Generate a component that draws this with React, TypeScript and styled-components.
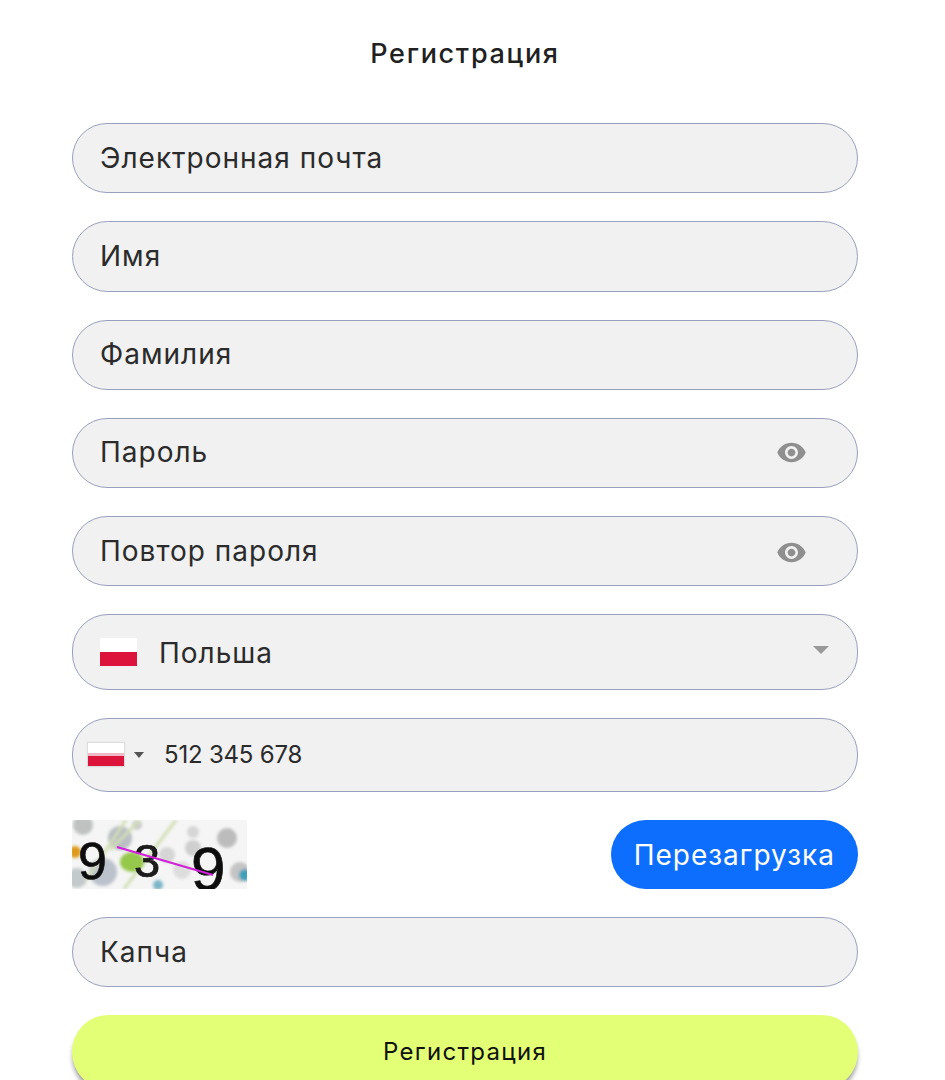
import styled, { createGlobalStyle } from 'styled-components';
import { MdVisibility } from 'react-icons/md';

const GlobalStyle = createGlobalStyle`
  html, body {
    margin: 0;
    padding: 0;
    height: 1080px;
    overflow: hidden;
    background: #fff;
    font-family: 'Inter', 'Open Sans', sans-serif;
  }
  * { box-sizing: border-box; }
`;

const Page = styled.main`
  width: 945px;
  height: 1080px;
  overflow: hidden;
  padding: 0 87px 0 72px;
`;

const Title = styled.h1`
  margin: 0;
  height: 123px;
  padding-top: 37px;
  font-size: 27px;
  line-height: 34px;
  font-weight: 500;
  letter-spacing: 1.7px;
  color: #212121;
  text-align: center;
`;

const Form = styled.form`
  display: flex;
  flex-direction: column;
  gap: 28px;
`;

const Field = styled.div<{ $height?: number; $pad?: number }>`
  display: flex;
  flex: none;
  align-items: center;
  height: ${({ $height }) => $height ?? 70.25}px;
  padding: 0 28px 0 ${({ $pad }) => $pad ?? 27}px;
  background: #f1f1f1;
  border: 1px solid #98a0bd;
  border-radius: 36px;
  color: #2b2b2b;
  font-size: 28px;
  letter-spacing: 1px;
`;

const Label = styled.span<{ $shift?: number }>`
  flex: 1;
  margin-top: ${({ $shift }) => $shift ?? -1}px;
`;

const EyeButton = styled.span<{ $shift?: number }>`
  display: flex;
  margin: ${({ $shift }) => $shift ?? 0}px 22px 0 0;
  color: #8f8f8f;
`;

const Arrow = styled.span`
  width: 0;
  height: 0;
  border-left: 8px solid transparent;
  border-right: 8px solid transparent;
  border-top: 8px solid #999;
  margin-top: -4px;
`;

const CountryFlag = styled.span`
  flex: none;
  width: 37px;
  height: 28px;
  margin-right: 22px;
  background: linear-gradient(#fff 0 50%, #dc143c 50%);
`;

const PhoneFlag = styled.span`
  flex: none;
  width: 36px;
  height: 23px;
  margin-top: -1px;
  box-shadow: 0 0 1px 1px #ddd;
  background: linear-gradient(#fff 0 42%, #eeb8c4 42% 56%, #dc143c 56%);
`;

const PhoneArrow = styled.span`
  flex: none;
  width: 0;
  height: 0;
  margin: 0 20px 0 10px;
  border-left: 5px solid transparent;
  border-right: 5px solid transparent;
  border-top: 6px solid #555;
`;

const Phone = styled.span`
  margin-top: -1px;
  font-size: 24px;
  letter-spacing: -0.2px;
  color: #2b2b2b;
`;

const CaptchaRow = styled.div`
  display: flex;
  flex: none;
  align-items: center;
  justify-content: space-between;
  height: 69px;
`;

const CaptchaImage = styled.svg`
  display: block;
  width: 175px;
  height: 69px;
`;

const ReloadButton = styled.button`
  height: 69px;
  padding: 0 23px;
  border: none;
  border-radius: 35px;
  background: #0d6efd;
  color: #fff;
  font-family: inherit;
  font-size: 28px;
  letter-spacing: 1px;
`;

const SubmitButton = styled.button`
  flex: none;
  height: 74px;
  padding: 0 0 2px;
  border: none;
  border-radius: 36px / 37px;
  background: #e3ff75;
  color: #111;
  font-family: inherit;
  font-size: 24px;
  letter-spacing: 1.3px;
  box-shadow: 0 5px 5px -1px rgba(0, 0, 0, 0.45);
`;

const Captcha = () => (
  <CaptchaImage viewBox="0 0 175 69">
    <defs>
      <filter id="back">
        <feGaussianBlur stdDeviation="1.4" />
      </filter>
      <filter id="soft">
        <feGaussianBlur stdDeviation="0.5" />
      </filter>
    </defs>
    <rect width="175" height="69" fill="#f4f5f4" />
    <g filter="url(#back)">
      <circle cx="11" cy="5" r="10" fill="#c0c2c2" />
      <circle cx="48" cy="18" r="12" fill="#b9bfc4" />
      <circle cx="31" cy="52" r="14" fill="#bcc2cc" />
      <circle cx="5" cy="58" r="10" fill="#c4cacb" />
      <circle cx="65" cy="5" r="5" fill="#cccccc" />
      <circle cx="95" cy="35" r="8" fill="#d6d6d6" />
      <circle cx="121" cy="12" r="6" fill="#d6d6d6" />
      <circle cx="121" cy="28" r="8" fill="#cfcfcf" />
      <circle cx="155" cy="18" r="10" fill="#bcbcbc" />
      <circle cx="168" cy="52" r="10" fill="#c4c4c4" />
      <circle cx="110" cy="50" r="9" fill="#dddddd" />
      <circle cx="86" cy="65" r="5" fill="#7fb5c8" />
      <circle cx="173" cy="55" r="6" fill="#3f9fb8" />
      <circle cx="3" cy="32" r="6" fill="#df9a1e" />
      <path d="M14 60 L54 0 M52 69 L104 0 M38 30 L68 0" stroke="#d2deb4" strokeWidth="3" />
      <ellipse cx="60" cy="42" rx="12" ry="10" fill="#96c84c" />
    </g>
    <g filter="url(#soft)" fontFamily="Liberation Sans, sans-serif" stroke="#111" strokeWidth="0.700">
      <text x="6" y="59" fontSize="52" fill="#111">9</text>
      <text x="62" y="57" fontSize="47" fill="#1c1c1c">3</text>
      <text x="119" y="70" fontSize="62" fill="#0c0c0c">9</text>
    </g>
    <path d="M45 27 L141 55" stroke="#d020d8" strokeWidth="2.200" filter="url(#soft)" />
  </CaptchaImage>
);

export default function App() {
  return (
    <>
      <GlobalStyle />
      <Page>
        <Title>Регистрация</Title>
        <Form>
          <Field><Label>Электронная почта</Label></Field>
          <Field><Label>Имя</Label></Field>
          <Field><Label>Фамилия</Label></Field>
          <Field>
            <Label>Пароль</Label>
            <EyeButton><MdVisibility size={31} /></EyeButton>
          </Field>
          <Field>
            <Label>Повтор пароля</Label>
            <EyeButton $shift={3}><MdVisibility size={31} /></EyeButton>
          </Field>
          <Field $height={76}>
            <CountryFlag />
            <Label $shift={1}>Польша</Label>
            <Arrow />
          </Field>
          <Field $height={74} $pad={15}>
            <PhoneFlag />
            <PhoneArrow />
            <Phone>512 345 678</Phone>
          </Field>
          <CaptchaRow>
            <Captcha />
            <ReloadButton type="button">Перезагрузка</ReloadButton>
          </CaptchaRow>
          <Field $height={70}><Label>Капча</Label></Field>
          <SubmitButton type="button">Регистрация</SubmitButton>
        </Form>
      </Page>
    </>
  );
}
